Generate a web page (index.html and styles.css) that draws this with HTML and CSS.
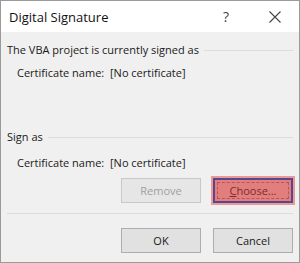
FILE: index.html
```html
<!DOCTYPE html>
<html lang="en">
<head>
  <meta charset="UTF-8">
  <title>Digital Signature</title>
  <link rel="stylesheet" href="styles.css">
</head>
<body>
<div class="window">
  <div class="titlebar">
    <span class="title">Digital Signature</span>
    <span class="help">?</span>
    <svg class="close" width="12" height="12" viewBox="0 0 12 12">
      <path d="M0.5 0.5 L11.5 11.5 M11.5 0.5 L0.5 11.5" stroke="#444" stroke-width="1.1" fill="none"/>
    </svg>
  </div>

  <div class="content">
    <!-- signed as -->
    <div class="group-head first">
      <span>The VBA project is currently signed as</span>
      <div class="line"></div>
    </div>
    <div class="cert one">
      <span class="label">Certificate name:</span>
      <span>[No certificate]</span>
    </div>

    <!-- sign as -->
    <div class="group-head second">
      <span>Sign as</span>
      <div class="line"></div>
    </div>
    <div class="cert two">
      <span class="label">Certificate name:</span>
      <span>[No certificate]</span>
    </div>

    <div class="actions top">
      <button class="btn disabled">Remove</button>
      <button class="btn chosen"><u>C</u>hoose...</button>
    </div>

    <div class="sep"></div>

    <div class="actions bottom">
      <button class="btn">OK</button>
      <button class="btn">Cancel</button>
    </div>
  </div>
</div>
</body>
</html>
```

FILE: styles.css
```css
* {
  margin: 0;
  padding: 0;
  box-sizing: border-box;
}

body {
  font-family: 'Open Sans', 'Noto Sans', sans-serif;
  font-size: 11px;
  color: #1a1a1a;
  width: 300px;
  height: 263px;
  overflow: hidden;
  white-space: nowrap;
}

.window {
  width: 300px;
  height: 263px;
  border: 1px solid #9a9a9a;
  background-color: #f0f0f0;
  display: flex;
  flex-direction: column;
}

.titlebar {
  height: 31px;
  flex-shrink: 0;
  background-color: white;
  display: flex;
  align-items: center;
  padding-left: 8px;
}

.title {
  font-size: 13px;
  color: #111;
  flex: 1;
}

.help {
  font-size: 14px;
  color: #444;
  margin-right: 40px;
}

.close {
  margin-right: 18px;
}

.content {
  flex: 1;
  display: flex;
  flex-direction: column;
  padding: 0 6px 0 6px;
}

.group-head {
  display: flex;
  align-items: center;
  line-height: 16px;
}

.group-head.first { margin-top: 10px; }
.group-head.second { margin-top: 48px; }

.group-head .line {
  flex: 1;
  height: 1px;
  background-color: #dcdcdc;
  margin-left: 5px;
}

.cert {
  display: flex;
  line-height: 16px;
  padding-left: 10px;
}

.cert.one { margin-top: 7px; }
.cert.two { margin-top: 10px; }

.cert .label {
  width: 93px;
  flex-shrink: 0;
}

.actions {
  display: flex;
  justify-content: flex-end;
  gap: 12px;
}

.actions.top { margin-top: 7px; }
.actions.bottom { margin-top: 14px; }

.btn {
  width: 80px;
  height: 25px;
  font-family: inherit;
  font-size: 11px;
  color: #1a1a1a;
  background-color: #e1e1e1;
  border: 1px solid #adadad;
}

.btn.disabled {
  color: #a0a0a0;
  background-color: #e6e6e6;
  border-color: #c8c8c8;
}

.btn.chosen {
  background-color: #e27e7e;
  border: 2px solid #56488c;
  box-shadow: 0 0 0 2px #eb9898;
  color: #7a2c2c;
  outline: 1px dashed #b85656;
  outline-offset: -5px;
}

.sep {
  height: 1px;
  background-color: #dcdcdc;
  margin-top: 10px;
}
```
